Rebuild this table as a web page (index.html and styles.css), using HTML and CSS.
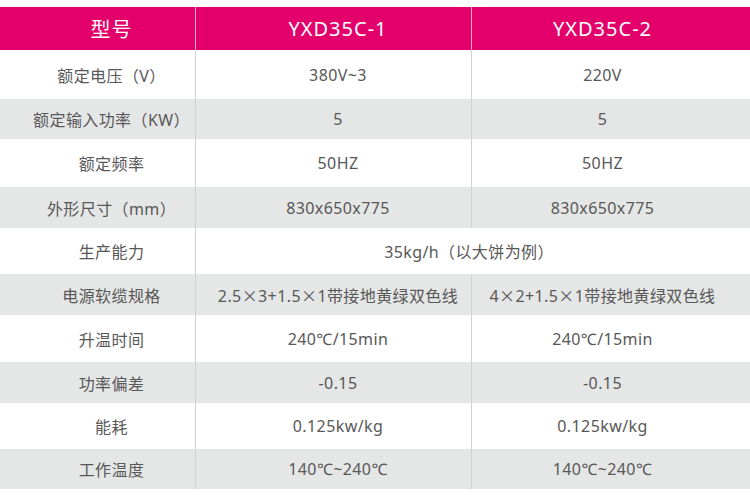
FILE: index.html
```html
<!DOCTYPE html>
<html lang="zh">
<head>
<meta charset="utf-8">
<link rel="stylesheet" href="styles.css">
</head>
<body>
<div class="spec">
  <div class="row head">
    <div class="c c1">型号</div>
    <div class="c c2">YXD35C-1</div>
    <div class="c c3">YXD35C-2</div>
  </div>
  <div class="row h49">
    <div class="c c1">额定电压（V）</div>
    <div class="c c2">380V~3</div>
    <div class="c c3">220V</div>
  </div>
  <div class="row alt h40">
    <div class="c c1">额定输入功率（KW）</div>
    <div class="c c2">5</div>
    <div class="c c3">5</div>
  </div>
  <div class="row h48">
    <div class="c c1">额定频率</div>
    <div class="c c2">50HZ</div>
    <div class="c c3">50HZ</div>
  </div>
  <div class="row alt h41">
    <div class="c c1">外形尺寸（mm）</div>
    <div class="c c2">830x650x775</div>
    <div class="c c3">830x650x775</div>
  </div>
  <div class="row h46">
    <div class="c c1">生产能力</div>
    <div class="c c23">35kg/h（以大饼为例）</div>
  </div>
  <div class="row alt h41">
    <div class="c c1">电源软缆规格</div>
    <div class="c c2"><span>2.5<span class="cjk">×</span>3+1.5<span class="cjk">×</span>1带接地黄绿双色线</span></div>
    <div class="c c3"><span>4<span class="cjk">×</span>2+1.5<span class="cjk">×</span>1带接地黄绿双色线</span></div>
  </div>
  <div class="row h47">
    <div class="c c1">升温时间</div>
    <div class="c c2">240℃/15min</div>
    <div class="c c3">240℃/15min</div>
  </div>
  <div class="row alt h41">
    <div class="c c1">功率偏差</div>
    <div class="c c2">-0.15</div>
    <div class="c c3">-0.15</div>
  </div>
  <div class="row h46">
    <div class="c c1">能耗</div>
    <div class="c c2">0.125kw/kg</div>
    <div class="c c3">0.125kw/kg</div>
  </div>
  <div class="row alt h40">
    <div class="c c1">工作温度</div>
    <div class="c c2">140℃~240℃</div>
    <div class="c c3">140℃~240℃</div>
  </div>
</div>
</body>
</html>
```

FILE: styles.css
```css
html, body {
  margin: 0;
  padding: 0;
  background: #ffffff;
}
body {
  width: 750px;
  height: 495px;
  overflow: hidden;
  font-family: "Noto Sans", "Noto Sans CJK SC", sans-serif;
  color: #585858;
}
.spec {
  padding-top: 7px;
}
.row {
  display: grid;
  grid-template-columns: 195px 276px 279px;
  font-size: 16px;
  letter-spacing: 0.4px;
}
.row.alt {
  background: #e5e6e6;
}
.row.head {
  height: 43px;
  background: #e4006b;
  color: #ffffff;
  font-size: 20px;
  letter-spacing: 1px;
}
.h49 { height: 49px; }
.h48 { height: 48px; }
.h47 { height: 47px; }
.h46 { height: 46px; }
.h41 { height: 41px; }
.h40 { height: 40px; }
.c {
  box-sizing: border-box;
  display: flex;
  align-items: center;
  justify-content: center;
  white-space: nowrap;
}
.cjk {
  font-family: "Noto Sans CJK SC", sans-serif;
}
.c1 {
  padding-left: 28px;
}
.c2 {
  border-left: 1px solid #d2d2d2;
  padding-left: 9px;
}
.c3 {
  border-left: 1px solid #d2d2d2;
  padding-right: 17px;
}
.c23 {
  grid-column: 2 / span 2;
  border-left: 1px solid #d2d2d2;
  padding-left: 9px;
  padding-right: 17px;
}
.head .c2, .head .c3 {
  border-left-color: #f3a6c8;
}
```
